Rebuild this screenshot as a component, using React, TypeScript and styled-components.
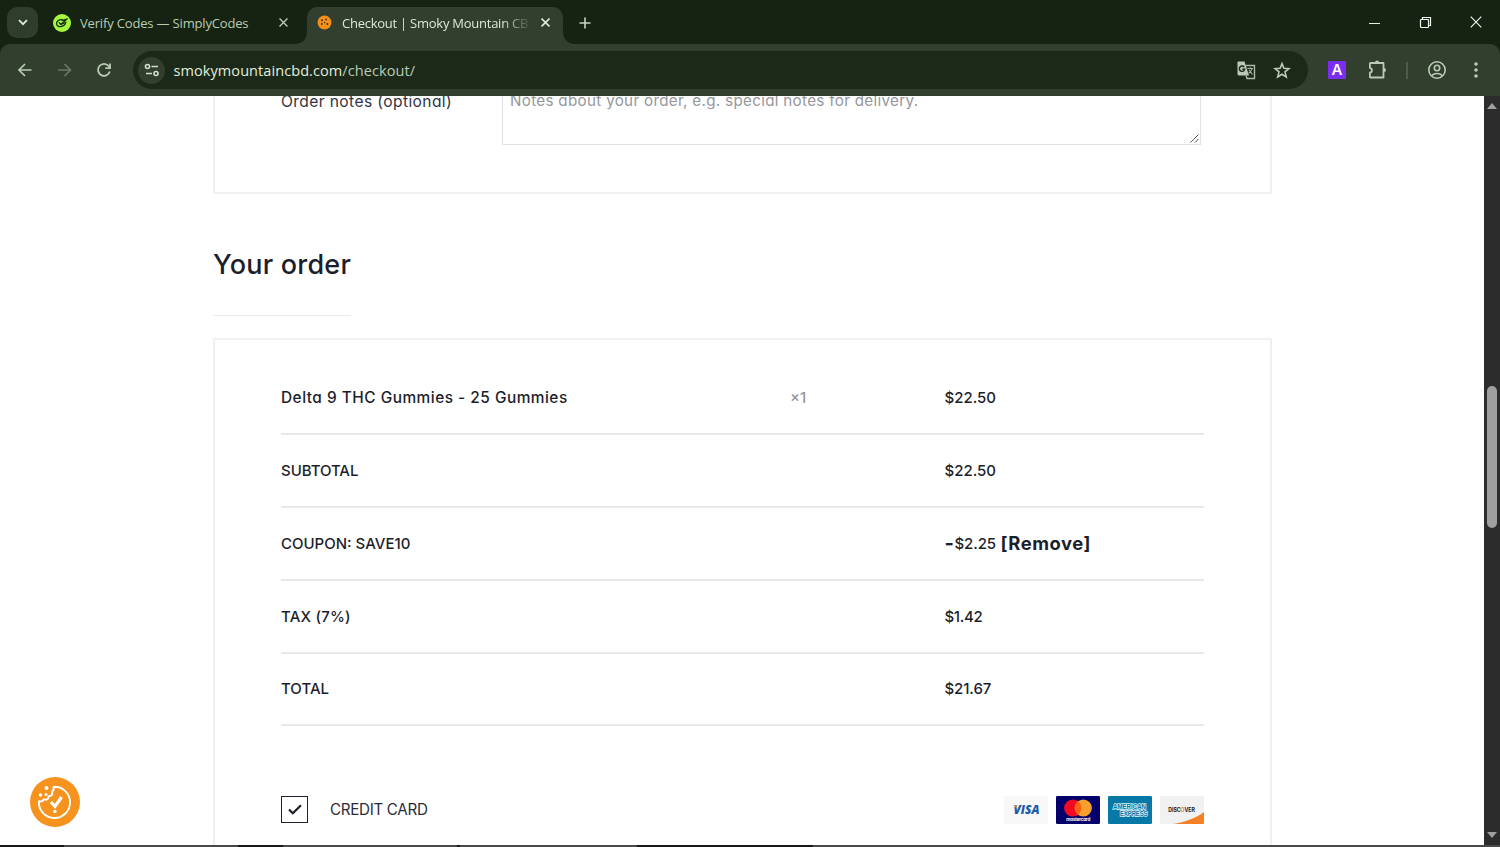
import React from "react";
import styled, { createGlobalStyle, css } from "styled-components";

const GlobalStyle = createGlobalStyle`
  * { box-sizing: border-box; }
  body { margin: 0; background: #fff; overflow: hidden; }
`;

const Window = styled.div`
  position: relative;
  display: flex;
  flex-direction: column;
  width: 1500px;
  height: 847px;
  overflow: hidden;
  background: #162312;
`;

const chromeFont = css`
  font-family: "Open Sans", "Noto Sans", sans-serif;
`;

const TabStrip = styled.header`
  display: flex;
  flex: 0 0 44px;
  padding: 7px 0 0 7px;
  color: #b9ccb3;
  ${chromeFont}
`;

const TabSearch = styled.div`
  display: grid;
  place-items: center;
  width: 31px;
  height: 31px;
  border-radius: 10px;
  background: #2f3d2c;
`;

const Tab = styled.div<{ $active?: boolean }>`
  position: relative;
  display: flex;
  align-items: center;
  width: ${(p) => (p.$active ? 256 : 254)}px;
  margin-left: ${(p) => (p.$active ? 0 : 15)}px;
  height: 37px;
  padding: 0 11px 6px ${(p) => (p.$active ? 10 : 0)}px;
  border-radius: 10px 10px 0 0;
  background: ${(p) => (p.$active ? "#323f2e" : "transparent")};
  color: ${(p) => (p.$active ? "#dbe8d5" : "#b9ccb3")};
  ${(p) =>
    p.$active &&
    css`
      &::before,
      &::after {
        content: "";
        position: absolute;
        bottom: 0;
        width: 11px;
        height: 11px;
      }
      &::before {
        left: -11px;
        background: radial-gradient(circle at 0 0, transparent 10.5px, #323f2e 11px);
      }
      &::after {
        right: -11px;
        background: radial-gradient(circle at 100% 0, transparent 10.5px, #323f2e 11px);
      }
    `}
`;

const TabTitle = styled.span<{ $spacing: number; $width: number; $fade?: boolean; $gap: number }>`
  display: block;
  width: ${(p) => p.$width}px;
  margin-left: ${(p) => p.$gap}px;
  overflow: hidden;
  white-space: nowrap;
  font-size: 13px;
  line-height: 20px;
  letter-spacing: ${(p) => p.$spacing}px;
  ${(p) => p.$fade && css`mask-image: linear-gradient(90deg, #000 160px, transparent 190px);`}
`;

const TabClose = styled.span<{ $gap: number }>`
  display: flex;
  margin-left: ${(p) => p.$gap}px;
`;

const NewTab = styled.div`
  display: flex;
  padding: 9px 0 0 15px;
`;

const WindowButtons = styled.div`
  display: flex;
  gap: 38px;
  margin-left: auto;
  padding: 9px 18px 0 0;
`;

const Toolbar = styled.nav`
  display: flex;
  align-items: center;
  flex: 0 0 52px;
  padding-left: 15px;
  border-radius: 10px 10px 0 0;
  background: #323f2e;
  color: #b9ccb3;
  ${chromeFont}
`;

const NavButtons = styled.div`
  display: flex;
  gap: 19.5px;
  width: 118px;
`;

const Omnibox = styled.div`
  display: flex;
  align-items: center;
  width: 1175px;
  height: 38px;
  padding: 0 16px 0 5px;
  border-radius: 19px;
  background: #1c2919;
`;

const SiteChip = styled.div`
  display: grid;
  place-items: center;
  width: 27px;
  height: 27px;
  margin-right: 8.5px;
  border-radius: 50%;
  background: #323f2e;
`;

const Url = styled.span`
  padding-top: 1px;
  font-size: 14.5px;
  line-height: 20px;
  color: #e2eddc;
  letter-spacing: 0.08px;
  white-space: nowrap;
  i { font-style: normal; color: #b9c9b3; }
`;

const OmniActions = styled.div`
  display: flex;
  align-items: center;
  gap: 17px;
  margin-left: auto;
`;

const Extensions = styled.div`
  display: flex;
  align-items: center;
  margin-left: 20px;
`;

const ExtensionBadge = styled.span`
  width: 18px;
  height: 18px;
  margin-right: 21px;
  border-radius: 1px;
  background: #7c2df2;
  color: #fff;
  font: 600 15px/18px Inter, sans-serif;
  text-align: center;
`;

const ToolbarDivider = styled.span`
  width: 1.5px;
  height: 17px;
  margin: 0 19px 0 18px;
  background: #4a5e45;
`;

const MenuDots = styled.svg`
  margin-left: 26px;
`;

const Viewport = styled.div`
  display: flex;
  flex: 0 0 749px;
  background: #fff;
`;

const Page = styled.main`
  position: relative;
  flex: 1;
  height: 749px;
  padding-left: 213px;
  overflow: hidden;
  background: #fff;
  color: #1d1e2b;
  font-family: Inter, "Open Sans", sans-serif;
  font-feature-settings: "cv11";
`;

const NotesCard = styled.section`
  display: flex;
  width: 1059px;
  height: 98px;
  padding-left: 66px;
  border: solid #f0f0f1;
  border-width: 0 2px 2px;
`;

const NotesLabel = styled.label`
  width: 221px;
  margin-top: -6px;
  font-size: 15.6px;
  line-height: 24px;
  letter-spacing: 0.39px;
  white-space: nowrap;
  color: #33343f;
`;

const NotesField = styled.div`
  position: relative;
  width: 699px;
  height: 49px;
  padding-left: 7px;
  border: solid #e3e3e5;
  border-width: 0 1px 1px;
  font-size: 15.2px;
  line-height: 24px;
  letter-spacing: 0.31px;
  color: #96979d;
  white-space: nowrap;
  span { display: block; margin-top: -7px; }
  svg { position: absolute; right: 1px; bottom: 1px; }
`;

const Heading = styled.h2`
  width: 138px;
  height: 78px;
  margin: 44px 0 22px;
  padding-top: 10px;
  border-bottom: 1px solid #ececee;
  font-size: 27px;
  font-weight: 500;
  line-height: 34px;
  letter-spacing: 0.22px;
  white-space: nowrap;
`;

const OrderCard = styled.section`
  width: 1059px;
  height: 520px;
  padding: 22.4px 66px 0;
  border: 2px solid #f0f0f1;
  border-bottom: 0;
`;

const Row = styled.div`
  display: flex;
  align-items: center;
  width: 923px;
  height: 72.8px;
  border-bottom: 2px solid #e8e8ea;
  font-size: 15px;
  font-weight: 500;
  white-space: nowrap;
`;

const Name = styled.div`
  width: 509px;
`;

const ProductName = styled.span`
  font-size: 15.4px;
  letter-spacing: 0.5px;
`;

const Quantity = styled.div`
  width: 154.5px;
  color: #94959b;
`;

const Amount = styled.div`
  display: flex;
  align-items: center;
`;

const Label = styled.span<{ $spacing?: number }>`
  letter-spacing: ${(p) => p.$spacing ?? 0}px;
`;

const Minus = styled.b`
  width: 10px;
  font-size: 20px;
  font-weight: 700;
  line-height: 20px;
`;

const Remove = styled.b`
  margin-left: 4.5px;
  font-size: 18.4px;
  font-weight: 700;
  letter-spacing: 0.55px;
`;

const Payment = styled.div`
  display: flex;
  align-items: center;
  width: 923px;
  height: 28px;
  margin-top: 69.6px;
`;

const Checkbox = styled.span`
  display: grid;
  place-items: center;
  width: 27px;
  height: 27px;
  margin-right: 22px;
  border: 1.5px solid #20212c;
`;

const PaymentName = styled.span`
  font-size: 15.2px;
  letter-spacing: -0.32px;
  color: #2b2c38;
  white-space: nowrap;
`;

const Cards = styled.div`
  display: flex;
  gap: 8px;
  margin-left: auto;
  svg { display: block; }
`;

const CookieButton = styled.div`
  position: absolute;
  left: 30px;
  top: 681px;
  width: 50px;
  height: 50px;
`;

const Scrollbar = styled.aside`
  display: flex;
  flex-direction: column;
  align-items: center;
  width: 16px;
  padding: 7px 0 7px;
  background: #2c2c2c;
`;

const Thumb = styled.div`
  width: 10px;
  height: 142px;
  margin: 277px 0 auto;
  border-radius: 5px;
  background: #9f9f9f;
`;

const TaskbarEdge = styled.footer`
  display: grid;
  flex: 0 0 2px;
  grid-template-columns: 64px 174px 45px 174px 3px 177px 176px 1fr;
  background: #171919;
  span:nth-child(even) { background: #474a48; }
`;

const Cross = ({ size = 9, width = 1.5, color = "currentColor" }) => (
  <svg width={size} height={size} viewBox="0 0 10 10" stroke={color} strokeWidth={width} fill="none">
    <path d="M.6.6 9.4 9.4M9.4.6.6 9.4" />
  </svg>
);

const orderRows = [
  { name: "SUBTOTAL", amount: "$22.50", nameSpacing: -0.05, amountSpacing: 0 },
  { name: "COUPON: SAVE10", amount: "$2.25", nameSpacing: 0, amountSpacing: -0.1, coupon: true },
  { name: "TAX (7%)", amount: "$1.42", nameSpacing: 0.2, amountSpacing: -0.35 },
  { name: "TOTAL", amount: "$21.67", nameSpacing: 0, amountSpacing: -0.1 },
];

const VisaCard = () => (
  <svg width="44" height="28" viewBox="0 0 44 28">
    <rect width="44" height="28" rx="1" fill="#f8f8f9" />
    <text x="9.5" y="17.9" fontFamily="Open Sans, sans-serif" fontSize="11.5" fontWeight="800" fontStyle="italic" fill="#1a5ba6" textLength="26" lengthAdjust="spacingAndGlyphs">VISA</text>
    <path d="M9 9.600h3.300l1.500 4.200-1.500-2.400Z" fill="#e8a52b" />
  </svg>
);

const MasterCard = () => (
  <svg width="44" height="28" viewBox="0 0 44 28">
    <rect width="44" height="28" rx="1.3" fill="#04006b" />
    <circle cx="16.7" cy="12" r="8.6" fill="#f30a20" />
    <circle cx="27.3" cy="12" r="8.6" fill="#fa9f2c" />
    <path d="M22 5.200a8.600 8.600 0 0 1 0 13.600 8.600 8.600 0 0 1 0-13.600Z" fill="#ff6112" />
    <text x="10.3" y="24.700" fontFamily="Inter, sans-serif" fontSize="4.600" fontWeight="700" fill="#fff" textLength="24">mastercard</text>
  </svg>
);

const AmexCard = () => (
  <svg width="44" height="28" viewBox="0 0 44 28">
    <rect width="44" height="28" rx="1.3" fill="#0878a6" />
    <g fontFamily="Liberation Sans, sans-serif" fontSize="6.800" fontWeight="700" fill="#0878a6" stroke="#d8f0f7" strokeWidth="1.500" paintOrder="stroke">
      <text x="5" y="13" textLength="33" lengthAdjust="spacingAndGlyphs">AMERICAN</text>
      <text x="12" y="20.200" textLength="27.500" lengthAdjust="spacingAndGlyphs">EXPRESS</text>
    </g>
  </svg>
);

const DiscoverCard = () => (
  <svg width="44" height="28" viewBox="0 0 44 28">
    <rect width="44" height="28" rx="1" fill="#f1f1f2" />
    <path d="M13 28C25 26 36 22 44 16v11a1 1 0 0 1-1 1Z" fill="#f58025" />
    <text x="8.2" y="15.800" fontFamily="Inter, sans-serif" fontSize="5.600" fontWeight="700" fill="#222" textLength="26.600" lengthAdjust="spacingAndGlyphs">
      DISC<tspan fill="#f58025">O</tspan>VER
    </text>
  </svg>
);

export default function App() {
  return (
    <Window>
      <GlobalStyle />
      <TabStrip>
        <TabSearch>
          <svg width="10" height="7" viewBox="0 0 10 7" fill="none" stroke="#dbe8d5" strokeWidth="1.900"><path d="m1 1.200 4 4 4-4" /></svg>
        </TabSearch>
        <Tab>
          <svg width="18" height="18" viewBox="0 0 18 18">
            <circle cx="9" cy="9" r="9" fill="#a5f83f" />
            <g fill="none" stroke="#1b3511" strokeWidth="1.300" strokeLinecap="round" strokeLinejoin="round">
              <path d="M9.300 5.700C6.300 5.200 3.600 7.100 3.500 9.600c0 2.300 2.200 3.400 4.700 2.900 2.400-.5 4.300-2.100 4.600-4.300" />
              <path d="M6.300 8.700 7.800 10.400l6.500-5.600-5 1.900" /><path d="M7.900 10.300l3.600-1.500" />
            </g>
          </svg>
          <TabTitle $spacing={-0.17} $width={180} $gap={9}>Verify Codes — SimplyCodes</TabTitle>
          <TabClose $gap={18.5}><Cross /></TabClose>
        </Tab>
        <Tab $active>
          <svg width="15" height="15" viewBox="0 0 15 15">
            <circle cx="7.500" cy="7.500" r="6.900" fill="#f3901d" />
            <g fill="#43300f"><circle cx="5" cy="5.300" r="1" /><circle cx="9" cy="4.500" r=".9" /><circle cx="7.600" cy="7.500" r=".8" /><circle cx="4.800" cy="9" r=".9" /><circle cx="10.300" cy="9" r="1" /></g>
          </svg>
          <TabTitle $spacing={-0.25} $width={186} $gap={10} $fade>Checkout | Smoky Mountain CBD</TabTitle>
          <TabClose $gap={13}><Cross width={1.800} /></TabClose>
        </Tab>
        <NewTab>
          <svg width="14" height="14" viewBox="0 0 14 14" stroke="#c5d5bf" strokeWidth="1.600"><path d="M7 1.500v11M1.500 7h11" /></svg>
        </NewTab>
        <WindowButtons>
          <svg width="13" height="13" viewBox="0 0 13 13" stroke="#e7efe4" strokeWidth="1"><path d="M1 7.500h11" /></svg>
          <svg width="13" height="13" viewBox="0 0 13 13" stroke="#f3f7f1" strokeWidth="1.200" fill="none"><rect x="1.500" y="3.500" width="8" height="8" rx=".8" /><path d="M3.500 3.300V1.500h8v8H9.700" /></svg>
          <Cross size={12} width={0.950} color="#f3f7f1" />
        </WindowButtons>
      </TabStrip>
      <Toolbar>
        <NavButtons>
          <svg width="20" height="20" viewBox="0 0 20 20" fill="none" stroke="#b9ccb3" strokeWidth="1.700"><path d="M16.500 10H4.500M10 4 4 10l6 6" /></svg>
          <svg width="20" height="20" viewBox="0 0 20 20" fill="none" stroke="#677a62" strokeWidth="1.700"><path d="M3 10h12M9.500 4l6 6-6 6" /></svg>
          <svg width="20" height="20" viewBox="0 0 20 20" fill="none" stroke="#b9ccb3" strokeWidth="1.800"><path d="M15.800 11.500A6 6 0 1 1 14.700 6l1.500 1.800" /><path d="M16 3.500v4.700h-4.700" /></svg>
        </NavButtons>
        <Omnibox>
          <SiteChip>
            <svg width="16" height="14" viewBox="0 0 16 14" fill="none" stroke="#d0dfca" strokeWidth="1.600"><circle cx="3.500" cy="3.500" r="2" /><path d="M7.500 3.500H14M2 10.500h6" /><circle cx="12" cy="10.500" r="2" /></svg>
          </SiteChip>
          <Url>smokymountaincbd.com<i>/checkout/</i></Url>
          <OmniActions>
            <svg width="19" height="19" viewBox="0 0 19 19">
              <path d="M1 .5h6.500l4.500 14H2A1.500 1.500 0 0 1 .5 13V1.500Z" fill="#b9c9b4" />
              <path d="M9 4.500h8.500v13H10l-1-3" fill="none" stroke="#a9baa4" strokeWidth="1.400" />
              <path d="M10.500 7.500H16M13.200 6.500v1M15 7.500c-.5 2.500-2 4-3.500 5M12 9l3.500 4.500" fill="none" stroke="#a9baa4" strokeWidth="1.100" />
              <path d="M7.200 6A2.700 2.700 0 1 0 7.700 8.300H5.300" fill="none" stroke="#1c2919" strokeWidth="1.400" />
            </svg>
            <svg width="19" height="19" viewBox="0 0 19 19" fill="none" stroke="#b9ccb3" strokeWidth="1.600"><path d="m9 2.600 1.900 4.700 5 .4-3.900 3.200 1.300 5L9 13.200l-4.300 2.700 1.300-5L2.100 7.700l5-.4Z" /></svg>
          </OmniActions>
        </Omnibox>
        <Extensions>
          <ExtensionBadge>A</ExtensionBadge>
          <svg width="21" height="20" viewBox="0 0 21 20" fill="none" stroke="#b9ccb3" strokeWidth="1.800" strokeLinejoin="round"><path d="M3.500 3h13v14.500h-13a.6.600 0 0 1-.6-.6v-4.200a2.500 2.500 0 0 0 0-4.900V3.600a.6.600 0 0 1 .6-.6Z" /><path d="M8 2.600a2 2 0 0 1 4 0ZM17 8a2 2 0 0 1 0 4Z" fill="#b9ccb3" stroke="none" /></svg>
          <ToolbarDivider />
          <svg width="20" height="20" viewBox="0 0 20 20" fill="none" stroke="#b9ccb3" strokeWidth="1.600"><circle cx="10" cy="10" r="8.200" /><circle cx="10" cy="8" r="2.700" /><path d="M4.500 15.700c3-3 8-3 11 0" /></svg>
          <MenuDots width="6" height="18" viewBox="0 0 6 18" fill="#b9ccb3"><circle cx="3" cy="3" r="1.800" /><circle cx="3" cy="9" r="1.800" /><circle cx="3" cy="15" r="1.800" /></MenuDots>
        </Extensions>
      </Toolbar>
      <Viewport>
        <Page>
          <NotesCard>
            <NotesLabel>Order notes (optional)</NotesLabel>
            <NotesField>
              <span>Notes about your order, e.g. special notes for delivery.</span>
              <svg width="9" height="9" viewBox="0 0 9 9" stroke="#555" strokeWidth="1"><path d="M.5 8.500l8-8M5 8.500 8.500 5" /></svg>
            </NotesField>
          </NotesCard>
          <Heading>Your order</Heading>
          <OrderCard>
            <Row>
              <Name><ProductName>Delta 9 THC Gummies - 25 Gummies</ProductName></Name>
              <Quantity><Label>×1</Label></Quantity>
              <Amount><Label>$22.50</Label></Amount>
            </Row>
            {orderRows.map((row) => (
              <Row key={row.name}>
                <Name><Label $spacing={row.nameSpacing}>{row.name}</Label></Name>
                <Quantity />
                <Amount>
                  {row.coupon && <Minus>-</Minus>}
                  <Label $spacing={row.amountSpacing}>{row.amount}</Label>
                  {row.coupon && <Remove>[Remove]</Remove>}
                </Amount>
              </Row>
            ))}
            <Payment>
              <Checkbox>
                <svg width="14" height="11" viewBox="0 0 14 11" fill="none" stroke="#1d1e2b" strokeWidth="2.200"><path d="M1 5.500 4.800 9.200 13 1.200" /></svg>
              </Checkbox>
              <PaymentName>CREDIT CARD</PaymentName>
              <Cards><VisaCard /><MasterCard /><AmexCard /><DiscoverCard /></Cards>
            </Payment>
          </OrderCard>
          <CookieButton>
            <svg width="50" height="50" viewBox="0 0 50 50">
              <circle cx="25" cy="25" r="25" fill="#f6921e" />
              <path d="M23.500 9.800A15.600 15.600 0 1 1 8.900 24.200c2.600.7 4.200 0 4.700-2 2.600 1.300 5 .2 5-2.700 3-.4 4.400-2.200 3.300-5 1.800-.8 2.300-2.500 1.600-4.700Z" fill="none" stroke="#fff" strokeWidth="1.900" strokeLinejoin="round" />
              <path d="m21 25 4 4.500L31.500 20" fill="none" stroke="#fff" strokeWidth="3.200" />
              <g fill="#fff"><circle cx="25" cy="34.500" r="1.700" /><circle cx="16.500" cy="11" r="2" /><circle cx="10.500" cy="18" r="1.700" /><circle cx="16" cy="17.500" r="1.500" /></g>
            </svg>
          </CookieButton>
        </Page>
        <Scrollbar>
          <svg width="10" height="6" viewBox="0 0 10 6"><path d="M5 0 10 6H0Z" fill="#a0a0a0" /></svg>
          <Thumb />
          <svg width="10" height="6" viewBox="0 0 10 6"><path d="M0 0h10L5 6Z" fill="#a0a0a0" /></svg>
        </Scrollbar>
      </Viewport>
      <TaskbarEdge><span /><span /><span /><span /><span /><span /><span /><span /></TaskbarEdge>
    </Window>
  );
}
